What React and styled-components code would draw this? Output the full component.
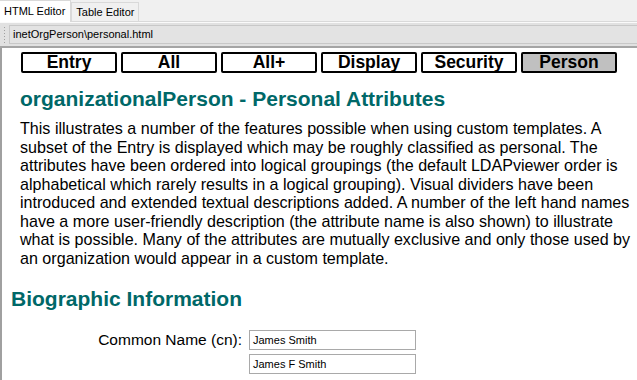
import React from 'react';
import styled, { createGlobalStyle } from 'styled-components';

const GlobalStyle = createGlobalStyle`
  html, body {
    margin: 0;
    padding: 0;
    background: #ffffff;
    overflow: hidden;
  }
  body {
    font-family: "Liberation Sans", Arial, sans-serif;
  }
`;

const Window = styled.div`
  width: 637px;
  height: 380px;
  display: flex;
  flex-direction: column;
  background: #f0f0f0;
  overflow: hidden;
`;

const TabBar = styled.div`
  height: 22px;
  display: flex;
  align-items: flex-end;
  background: #f0f0f0;
  border-bottom: 1px solid #d9d9d9;
  box-sizing: border-box;
`;

const Tab = styled.div`
  font-family: Tahoma, "Liberation Sans", sans-serif;
  font-size: 11px;
  color: #000;
  box-sizing: border-box;
  height: ${props => (props.active ? '22px' : '19px')};
  padding: ${props => (props.active ? '4px 5px 0 4px' : '3px 4px 0 4px')};
  background: ${props => (props.active ? '#ffffff' : '#f0f0f0')};
  border: 1px solid #d9d9d9;
  border-bottom: none;
  border-left: ${props => (props.active ? 'none' : '1px solid #d9d9d9')};
  margin-bottom: ${props => (props.active ? '-1px' : '0')};
`;

const Toolbar = styled.div`
  height: 23px;
  display: flex;
  align-items: center;
  background: #e1e1e1;
  border-top: 1px solid #fafafa;
  border-bottom: 2px solid #a5a5a5;
  padding-left: 3px;
  gap: 3px;
`;

const Grip = styled.div`
  width: 3px;
  height: 17px;
  background-image: radial-gradient(circle, #a0a0a0 0.8px, transparent 1px);
  background-size: 3px 3px;
`;

const AddressField = styled.div`
  flex: 1;
  height: 19px;
  box-sizing: border-box;
  border: 1px solid #c8c8c8;
  border-right: none;
  background: #e3e3e3;
  font-family: Tahoma, "Liberation Sans", sans-serif;
  font-size: 11px;
  line-height: 17px;
  padding-left: 3px;
  color: #000;
`;

const Content = styled.div`
  flex: 1;
  background: #ffffff;
  border-left: 2px solid #a0a0a0;
  padding: 4px 0 0 0;
  overflow: hidden;
`;

const ButtonRow = styled.div`
  display: flex;
  gap: 4px;
  padding-left: 19px;
`;

const NavButton = styled.div`
  width: 96px;
  height: 21px;
  box-sizing: border-box;
  border: 2px solid #000;
  border-radius: 2px;
  background: ${props => (props.selected ? '#c0c0c0' : '#ffffff')};
  display: flex;
  align-items: center;
  justify-content: center;
  font-weight: 700;
  font-size: 17.5px;
  color: #000;
  line-height: 1;
`;

const Title = styled.h1`
  margin: 14px 0 0 18px;
  font-size: 21px;
  font-weight: 700;
  color: #006868;
  line-height: 24px;
`;

const Intro = styled.p`
  margin: 8px 0 0 18px;
  font-size: 16.1px;
  line-height: 18.5px;
  color: #000;
  white-space: nowrap;
`;

const Section = styled.h2`
  margin: 20px 0 0 9px;
  font-size: 21px;
  font-weight: 700;
  color: #006868;
  line-height: 24px;
`;

const FieldGrid = styled.div`
  display: grid;
  grid-template-columns: 240px 167px;
  column-gap: 7px;
  row-gap: 4px;
  margin-top: 19px;
`;

const Label = styled.div`
  font-size: 15.5px;
  text-align: right;
  line-height: 20px;
  color: #000;
`;

const Input = styled.div`
  height: 20px;
  box-sizing: border-box;
  border: 1px solid #a9a9a9;
  background: #fff;
  font-family: Tahoma, "Liberation Sans", sans-serif;
  font-size: 11px;
  line-height: 18px;
  padding-left: 3px;
  color: #000;
`;

const buttons = ['Entry', 'All', 'All+', 'Display', 'Security', 'Person'];

const introLines = [
  'This illustrates a number of the features possible when using custom templates. A',
  'subset of the Entry is displayed which may be roughly classified as personal. The',
  'attributes have been ordered into logical groupings (the default LDAPviewer order is',
  'alphabetical which rarely results in a logical grouping). Visual dividers have been',
  'introduced and extended textual descriptions added. A number of the left hand names',
  'have a more user-friendly description (the attribute name is also shown) to illustrate',
  'what is possible. Many of the attributes are mutually exclusive and only those used by',
  'an organization would appear in a custom template.',
];

const App = () => (
  <>
    <GlobalStyle />
    <Window>
      <TabBar>
        <Tab active>HTML Editor</Tab>
        <Tab>Table Editor</Tab>
      </TabBar>
      <Toolbar>
        <Grip />
        <AddressField>inetOrgPerson\personal.html</AddressField>
      </Toolbar>
      <Content>
        <ButtonRow>
          {buttons.map(b => (
            <NavButton key={b} selected={b === 'Person'}>
              {b}
            </NavButton>
          ))}
        </ButtonRow>
        <Title>organizationalPerson - Personal Attributes</Title>
        <Intro>
          {introLines.map((line, i) => (
            <React.Fragment key={i}>
              {line}
              {i < introLines.length - 1 && <br />}
            </React.Fragment>
          ))}
        </Intro>
        <Section>Biographic Information</Section>
        <FieldGrid>
          <Label>Common Name (cn):</Label>
          <Input>James Smith</Input>
          <Label />
          <Input>James F Smith</Input>
        </FieldGrid>
      </Content>
    </Window>
  </>
);

export default App;
